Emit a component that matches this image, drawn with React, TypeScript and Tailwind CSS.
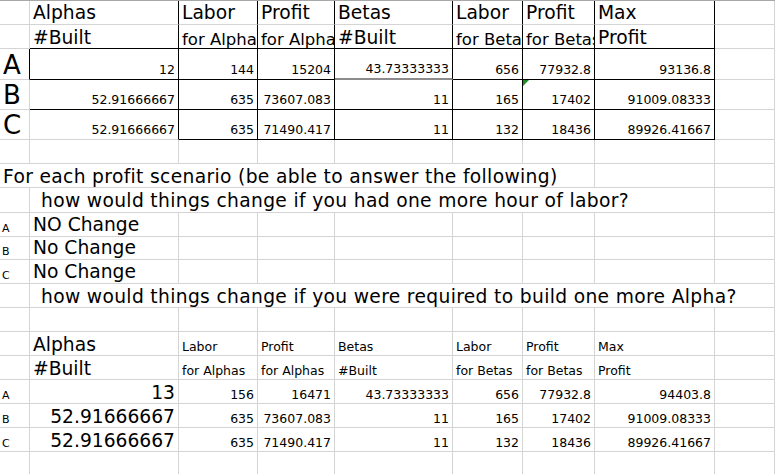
import React from 'react';

type Cell = {
  t?: string;
  s?: string; // font size class
  r?: boolean; // right aligned (numbers)
  rb?: boolean; // black right border
  bb?: boolean; // black bottom border
  pb?: string;
  spill?: boolean; // text runs over the empty cells to its right
  pl?: string;
  cls?: string;
  flag?: boolean; // green error triangle
};

const BIG = 'text-[18.7px]';
const MID = 'text-[16.5px]';
const NUM = 'text-[12.5px]';
const LBL = 'text-[26px]';
const SM = 'text-[11px]';

const blank = (n: number): Cell[] => Array.from({ length: n }, () => ({}));

// top table: rows 0-4 share the black frame on cols 1-7
const head1 = ['Alphas', 'Labor', 'Profit', 'Betas', 'Labor', 'Profit', 'Max'];
const head2: [string, string][] = [
  ['#Built', BIG],
  ['for Alphas', MID],
  ['for Alphas', MID],
  ['#Built', BIG],
  ['for Betas', MID],
  ['for Betas', MID],
  ['Profit', BIG],
];
const topData = [
  ['A', '12', '144', '15204', '43.73333333', '656', '77932.8', '93136.8'],
  ['B', '52.91666667', '635', '73607.083', '11', '165', '17402', '91009.08333'],
  ['C', '52.91666667', '635', '71490.417', '11', '132', '18436', '89926.41667'],
];

const rows: Cell[][] = [];

rows.push([{}, ...head1.map((t) => ({ t, s: BIG, rb: true, pb: 'pb-[1px]' })), {}]);
rows.push([{}, ...head2.map(([t, s]) => ({ t, s, rb: true, bb: true, pb: 'pb-[0px]' })), {}]);

topData.forEach((d, i) => {
  const row: Cell[] = [{ t: d[0], s: LBL, pb: 'pb-[1px]', rb: i === 0 }];
  d.slice(1).forEach((v, j) => {
    const col = j + 1;
    let bb = true;
    if (i === 2 && col === 1) bb = false;
    const c: Cell = { t: v, s: NUM, r: true, rb: true, bb, pb: 'pb-[3px]' };
    if (i === 0 && col === 4) {
      c.bb = false;
      c.cls = 'border-b-2 border-b-[#8c8c8c]';
    }
    if (i === 1 && col === 6) c.flag = true;
    row.push(c);
  });
  row.push({});
  rows.push(row);
});

rows.push(blank(9));
rows.push([
  { t: 'For each profit scenario (be able to answer the following)', s: BIG, spill: true, pb: 'pb-[0.5px]' },
  ...blank(8),
]);
rows.push([
  {},
  { t: 'how would things change if you had one more hour of labor?', s: BIG, spill: true, pl: 'pl-[11px]', pb: 'pb-[1px]' },
  ...blank(7),
]);
[
  ['A', 'NO Change'],
  ['B', 'No Change'],
  ['C', 'No Change'],
].forEach(([l, t]) => {
  rows.push([
    { t: l, s: SM, pb: 'pb-[2.5px]', pl: 'pl-[2px]' },
    { t, s: BIG, pb: 'pb-[1px]' },
    ...blank(7),
  ]);
});
rows.push([
  {},
  { t: 'how would things change if you were required to build one more Alpha?', s: BIG, spill: true, pl: 'pl-[11px]', pb: 'pb-[0.5px]' },
  ...blank(7),
]);
rows.push(blank(9));

// bottom table, plain gridlines
rows.push([
  {},
  { t: 'Alphas', s: BIG, pb: 'pb-[0.5px]' },
  { t: 'Labor', s: NUM, pb: 'pb-[1.5px]' },
  { t: 'Profit', s: NUM, pb: 'pb-[1.5px]' },
  { t: 'Betas', s: NUM, pb: 'pb-[1.5px]' },
  { t: 'Labor', s: NUM, pb: 'pb-[1.5px]' },
  { t: 'Profit', s: NUM, pb: 'pb-[1.5px]' },
  { t: 'Max', s: NUM, pb: 'pb-[1.5px]' },
  {},
]);
rows.push([
  {},
  { t: '#Built', s: BIG, pb: 'pb-[0.5px]' },
  { t: 'for Alphas', s: NUM, pb: 'pb-[1.5px]' },
  { t: 'for Alphas', s: NUM, pb: 'pb-[1.5px]' },
  { t: '#Built', s: NUM, pb: 'pb-[1.5px]' },
  { t: 'for Betas', s: NUM, pb: 'pb-[1.5px]' },
  { t: 'for Betas', s: NUM, pb: 'pb-[1.5px]' },
  { t: 'Profit', s: NUM, pb: 'pb-[1.5px]' },
  {},
]);
[
  ['A', '13', '156', '16471', '43.73333333', '656', '77932.8', '94403.8'],
  ['B', '52.91666667', '635', '73607.083', '11', '165', '17402', '91009.08333'],
  ['C', '52.91666667', '635', '71490.417', '11', '132', '18436', '89926.41667'],
].forEach((d) => {
  rows.push([
    { t: d[0], s: SM, pb: 'pb-[2.5px]', pl: 'pl-[2px]' },
    { t: d[1], s: BIG, r: true, pb: 'pb-[0.5px]' },
    ...d.slice(2).map((v) => ({ t: v, s: NUM, r: true, pb: 'pb-[1.5px]' })),
    {},
  ]);
});
rows.push(blank(9));

function SheetCell({ c }: { c: Cell }) {
  const base = [
    'relative flex items-end whitespace-nowrap leading-none text-black border-r border-b',
    c.rb ? 'border-r-black' : 'border-r-[#d4d4d4]',
    c.cls ? c.cls : c.bb ? 'border-b-black' : 'border-b-[#d4d4d4]',
    c.spill ? 'overflow-visible' : 'overflow-hidden',
    c.r ? 'justify-end pr-[3px]' : c.pl ?? 'pl-[3px]',
    c.s ?? NUM,
  ].join(' ');

  return (
    <div className={base}>
      {c.flag && (
        <svg className="absolute left-0 top-0" width="6" height="6" viewBox="0 0 6 6">
          <polygon points="0,0 6,0 0,6" fill="#1f8b24" />
        </svg>
      )}
      {c.spill ? (
        <div className={`relative z-10 h-full flex items-end bg-white pr-[2px] tracking-[0.33px] ${c.pb ?? ''}`}>
          {c.t}
        </div>
      ) : (
        c.t && <span className={c.pb}>{c.t}</span>
      )}
    </div>
  );
}

export default function App() {
  return (
    <div className="w-[775px] h-[474px] overflow-hidden bg-white font-['DejaVu_Sans',Verdana,sans-serif]">
      <div className="grid grid-cols-[30px_149px_79px_77px_118px_70px_72px_120px_60px] grid-rows-[24px_24px_31px_30px_30px_24px_24px_25px_24px_23px_24px_24px_24px_24px_24px_24px_24px_24px_23px] border-t border-t-[#a8a8a8]">
        {rows.map((row, i) => row.map((c, j) => <SheetCell key={`${i}-${j}`} c={c} />))}
      </div>
    </div>
  );
}
